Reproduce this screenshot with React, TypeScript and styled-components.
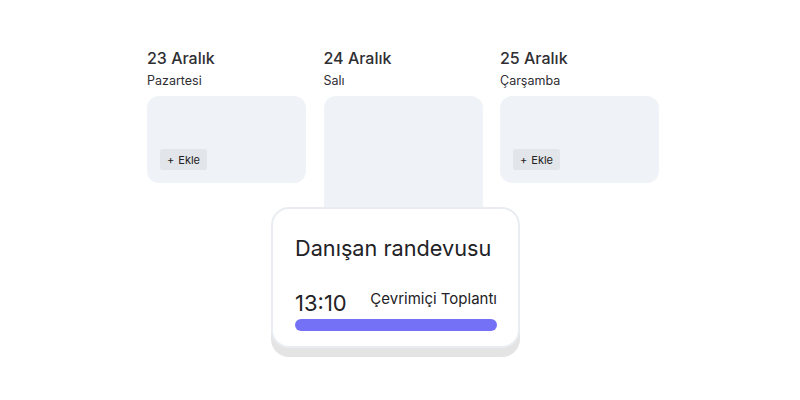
import * as React from 'react';
import styled, { createGlobalStyle } from 'styled-components';

const GlobalStyle = createGlobalStyle`
  html, body {
    margin: 0;
    padding: 0;
    background: #ffffff;
    font-family: Inter, "Noto Sans", sans-serif;
    color: #2a2a2e;
  }
`;

const Page = styled.div`
  position: relative;
  width: 800px;
  height: 400px;
  overflow: hidden;
`;

const Days = styled.div`
  display: flex;
  gap: 17.5px;
  padding: 48px 0 0 147px;
`;

const DayColumn = styled.div`
  width: 159px;
  display: flex;
  flex-direction: column;
`;

const DayTitle = styled.div`
  font-size: 16px;
  font-weight: 500;
  line-height: 20px;
  color: #2e2e33;
`;

const DayName = styled.div`
  margin-top: 5px;
  font-size: 12.5px;
  line-height: 16px;
  color: #2e2e33;
`;

const DayCard = styled.div<{ $tall?: boolean }>`
  margin-top: 7px;
  height: ${(p) => (p.$tall ? '160px' : '87px')};
  border-radius: 12px;
  background: #eff2f6;
  display: flex;
  align-items: flex-end;
  padding: 0 0 13px 13px;
  box-sizing: border-box;
`;

const AddButton = styled.div`
  height: 21px;
  padding: 0 7px;
  border-radius: 3px;
  background: #e2e5e9;
  font-size: 11px;
  color: #222;
  display: flex;
  align-items: center;
  gap: 4px;
`;

const Popup = styled.div`
  position: absolute;
  left: 271px;
  top: 207px;
  width: 249px;
  height: 141px;
  box-sizing: border-box;
  background: #ffffff;
  border: 2px solid #e9edf1;
  border-radius: 18px;
  box-shadow: 0 9px 0 0 #e4e4e4;
  padding: 24px 21px 0 22px;
`;

const PopupTitle = styled.div`
  font-size: 21.7px;
  line-height: 30px;
  color: #222226;
`;

const PopupRow = styled.div`
  margin-top: 26px;
  display: flex;
  justify-content: space-between;
  align-items: flex-end;
`;

const Time = styled.div`
  font-size: 22px;
  line-height: 26px;
  color: #222226;
`;

const Place = styled.div`
  font-size: 15px;
  line-height: 20px;
  color: #222226;
  margin-bottom: 7px;
`;

const Bar = styled.div`
  margin-top: 3px;
  height: 12px;
  border-radius: 6px;
  background: #7471f6;
`;

const days = [
  { title: '23 Aralık', name: 'Pazartesi', add: true },
  { title: '24 Aralık', name: 'Salı', add: false },
  { title: '25 Aralık', name: 'Çarşamba', add: true },
];

export default function App() {
  return (
    <Page>
      <GlobalStyle />
      <Days>
        {days.map((d) => (
          <DayColumn key={d.title}>
            <DayTitle>{d.title}</DayTitle>
            <DayName>{d.name}</DayName>
            <DayCard $tall={!d.add}>
              {d.add && (
                <AddButton>
                  <span>+</span>
                  <span>Ekle</span>
                </AddButton>
              )}
            </DayCard>
          </DayColumn>
        ))}
      </Days>
      <Popup>
        <PopupTitle>Danışan randevusu</PopupTitle>
        <PopupRow>
          <Time>13:10</Time>
          <Place>Çevrimiçi Toplantı</Place>
        </PopupRow>
        <Bar />
      </Popup>
    </Page>
  );
}
